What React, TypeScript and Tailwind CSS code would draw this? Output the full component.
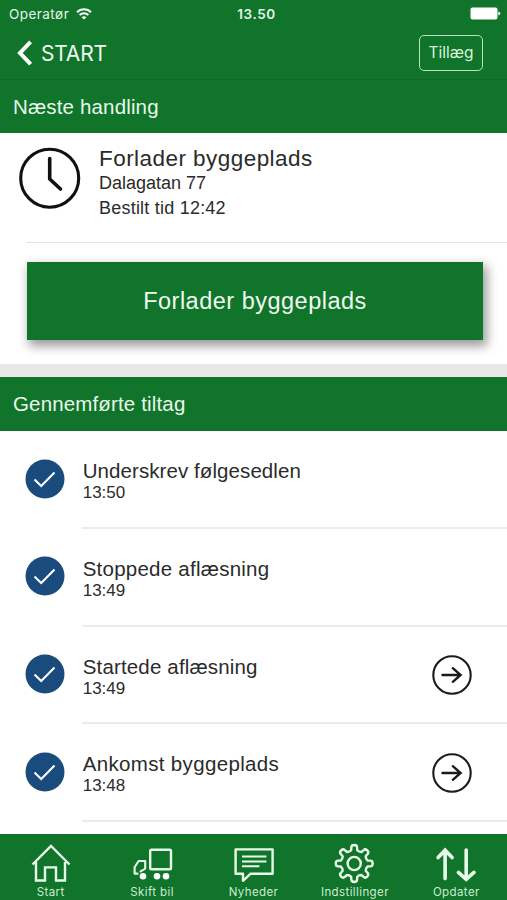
import type { ReactNode } from 'react';

type Action = { title: string; time: string; link?: boolean; tracking: string };

const actions: Action[] = [
  { title: 'Underskrev følgesedlen', time: '13:50', tracking: 'tracking-[0.08px]' },
  { title: 'Stoppede aflæsning', time: '13:49', tracking: 'tracking-[0.24px]' },
  { title: 'Startede aflæsning', time: '13:49', link: true, tracking: 'tracking-[0.16px]' },
  { title: 'Ankomst byggeplads', time: '13:48', link: true, tracking: 'tracking-[0.34px]' },
];

function polar(radius: number, degrees: number) {
  const a = (degrees * Math.PI) / 180;
  return `${(21.2 + radius * Math.sin(a)).toFixed(2)} ${(21.5 - radius * Math.cos(a)).toFixed(2)}`;
}

// Outline of an eight-toothed cog with rounded tips and valleys.
const gearPath =
  Array.from({ length: 8 }, (_, i) => {
    const a = i * 45;
    return [
      `${i === 0 ? 'M' : 'L'}${polar(13.6, a - 13)}`,
      `L${polar(16.4, a - 10)}`,
      `C${polar(19.4, a - 8)} ${polar(19.4, a + 8)} ${polar(16.4, a + 10)}`,
      `L${polar(13.6, a + 13)}`,
      `Q${polar(12.4, a + 22.5)} ${polar(13.6, a + 32)}`,
    ].join('');
  }).join('') + 'Z';

function StatusBar() {
  return (
    <div className="grid h-[27px] grid-cols-3 items-center pl-[9px] pr-[6px] font-['Inter',sans-serif] text-[13px] text-[#e4f5e6]">
      <div className="flex items-center gap-[7px]">
        <span className="pt-px text-[13.5px] tracking-[0.45px]">Operatør</span>
        <svg width="16" height="12" viewBox="0 0 16 12" fill="none" stroke="#f4fff4" strokeWidth="2">
          <path d="M1 4.2a10 10 0 0 1 14 0M3.6 7a6.3 6.3 0 0 1 8.8 0" />
          <path d="M5.6 9.2a3.6 3.6 0 0 1 4.8 0L8 11.6Z" fill="#f4fff4" stroke="none" />
        </svg>
      </div>
      <span className="pl-[3px] pt-px text-center text-[13.5px] font-semibold tracking-[0.6px]">13.50</span>
      <svg className="justify-self-end" width="31" height="13" viewBox="0 0 31 13" fill="#fff">
        <rect x="0.5" y="0.5" width="27" height="12" rx="2" />
        <path d="M28.3 4.5q2 .4 2 2t-2 2Z" />
      </svg>
    </div>
  );
}

function NavBar() {
  return (
    <div className="flex h-[53px] items-center justify-between border-b border-[#0d6a26] pl-[17px] pr-6 font-['Inter',sans-serif] text-[#effbef]">
      <div className="flex items-center gap-[9px]">
        <svg width="15" height="26" viewBox="0 0 15 26" fill="none" stroke="#fff" strokeWidth="4">
          <path d="M13.6 1.8 3 13l10.6 11.2" />
        </svg>
        <span className="text-[21px] leading-none tracking-[-0.2px]">START</span>
      </div>
      <button className="h-9 w-16 rounded-[5px] border-[1.5px] border-[#b9e2be] text-[15.5px] leading-none text-[#d9f3db]">
        Tillæg
      </button>
    </div>
  );
}

function SectionTitle({ children }: { children: ReactNode }) {
  return (
    <h2 className="flex h-[54px] shrink-0 items-center bg-[#10742b] pl-[13px] pt-px text-[20.5px] tracking-[0.15px] text-[#e9f8ea]">
      {children}
    </h2>
  );
}

function ActionRow({ title, time, link, tracking }: Action) {
  return (
    <li className="flex h-[97.75px] shrink-0 items-stretch pl-[25px]">
      <svg className="mt-[27.5px] shrink-0" width="40" height="40" viewBox="0 0 40 40" fill="none">
        <circle cx="20" cy="20" r="19.5" fill="#194b7d" />
        <path d="m9.5 20.6 6.7 6.4L29.5 13.6" stroke="#fff" strokeWidth="2.1" />
      </svg>
      <div className="ml-[17px] flex flex-1 justify-between border-b-2 border-[#ececec] pr-[35px]">
        <div className="pl-[0.7px] pt-[28px] text-[#2b2b2b]">
          <p className={`text-[20.5px] leading-[24px] ${tracking}`}>{title}</p>
          <p className="text-[17px] leading-[20px]">{time}</p>
        </div>
        {link && (
          <svg className="mt-[28.6px]" width="40" height="40" viewBox="0 0 40 40" fill="none" stroke="#1b1b1b">
            <circle cx="20" cy="20" r="18.7" strokeWidth="2.1" />
            <path d="M10.5 20H28M20.8 13.2l7.8 6.8-7.8 6.8" strokeWidth="2.4" strokeLinecap="round" />
          </svg>
        )}
      </div>
    </li>
  );
}

function Tab({ label, children }: { label: string; children: ReactNode }) {
  return (
    <div className="flex flex-1 flex-col items-center">
      <svg className="mt-[8px]" width="44" height="44" viewBox="0 0 44 44" fill="none" stroke="#e9fbe9" strokeWidth="2.4">
        {children}
      </svg>
      <span className="-mt-[1px] text-[11.5px] leading-[14px] tracking-[0.4px] text-[#cdeccf]">{label}</span>
    </div>
  );
}

function TabBar() {
  return (
    <nav className="flex h-[66px] shrink-0 bg-[#10742b] font-['Inter',sans-serif]">
      <Tab label="Start">
        <path d="M3.5 22.5 22 4l18.5 18.5M7 20v18.5h9V25.4h11v13.1h9V20" />
      </Tab>
      <Tab label="Skift bil">
        <rect x="20.2" y="7.8" width="20.8" height="19.4" rx="1.3" />
        <path d="M8.4 31.6H4.6v-6.4L8.6 19h6.6v7.6l-5.4 3.2" strokeWidth="2.1" strokeLinejoin="round" />
        <g fill="#fff" stroke="none">
          <circle cx="13" cy="34.2" r="3.3" />
          <circle cx="27" cy="34.2" r="3.3" />
          <circle cx="36" cy="34.2" r="3.3" />
        </g>
      </Tab>
      <Tab label="Nyheder">
        <path d="M3.6 7.4h37v24.4H18.4L11 38.8v-7H3.6Z" strokeLinejoin="round" />
        <path d="M10 14.5h24.4M10 19.4h24.4M10 24.3h17.4" strokeWidth="2" />
      </Tab>
      <Tab label="Indstillinger">
        <circle cx="21.2" cy="21.5" r="6.6" />
        <path d={gearPath} strokeLinejoin="round" />
      </Tab>
      <Tab label="Opdater">
        <path
          d="M11.1 36.6V8.6M4.1 15.6l7-7.4 7 7.4M32.2 8v28.6M24.4 30.4l7.8 7 7.8-7"
          strokeWidth="3.6"
          strokeLinecap="round"
        />
      </Tab>
    </nav>
  );
}

export default function App() {
  return (
    <div className="flex h-[900px] w-[507px] flex-col overflow-hidden bg-white font-['Liberation_Sans',Arial,sans-serif] whitespace-nowrap">
      <header className="shrink-0 bg-[#10742b]">
        <StatusBar />
        <NavBar />
      </header>
      <section className="h-[284px] shrink-0">
        <div className="h-[53px] overflow-hidden">
          <SectionTitle>Næste handling</SectionTitle>
        </div>
        <div className="flex h-[109px] pl-[18px]">
          <svg className="mt-[14px]" width="63" height="63" viewBox="0 0 63 63" fill="none" stroke="#111">
            <circle cx="31.7" cy="31.2" r="29" strokeWidth="3.1" />
            <path d="M31.7 11.5V32l10.8 10" strokeWidth="3.6" strokeLinecap="round" strokeLinejoin="round" />
          </svg>
          <div className="ml-[18px] pt-[13px] text-[#2b2b2b]">
            <p className="text-[22.5px] leading-[25px] tracking-[0.45px]">Forlader byggeplads</p>
            <p className="text-[18px] leading-[25px]">
              Dalagatan 77
              <br />
              <span className="tracking-[0.22px]">Bestilt tid 12:42</span>
            </p>
          </div>
        </div>
        <hr className="ml-[26px] border-[#e4e4e4]" />
        <div className="mt-[12px] h-[109px] overflow-hidden pl-[27px] pr-6 pt-[7px]">
          <button className="h-[78px] w-full bg-[#10742b] pt-px text-[23.5px] tracking-[0.5px] text-[#effbef] shadow-[3px_5px_10px_1px_rgba(0,0,0,0.4)]">
            Forlader byggeplads
          </button>
        </div>
      </section>
      <section className="flex min-h-0 flex-1 flex-col border-t-[13px] border-[#e7e7e7]">
        <SectionTitle>Gennemførte tiltag</SectionTitle>
        <ul className="flex min-h-0 flex-1 flex-col overflow-hidden">
          {actions.map((action) => (
            <ActionRow key={action.title} {...action} />
          ))}
        </ul>
      </section>
      <TabBar />
    </div>
  );
}
